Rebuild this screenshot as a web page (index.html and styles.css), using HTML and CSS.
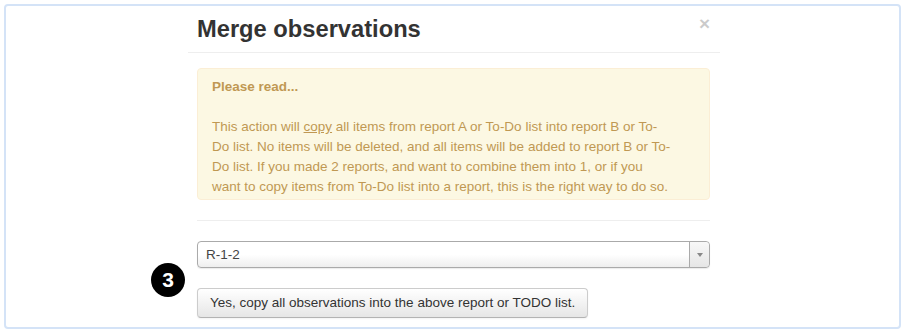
FILE: index.html
```html
<!DOCTYPE html>
<html lang="en">
<head>
  <meta charset="UTF-8" />
  <title>Merge observations</title>
  <link rel="stylesheet" href="styles.css">
</head>
<body>
  <div class="frame">
    <!-- step marker -->
    <div class="step">3</div>

    <div class="modal">
      <div class="modal-header">
        <span class="close">&times;</span>
        <h3>Merge observations</h3>
      </div>

      <div class="modal-body">
        <div class="alert">
          <strong>Please read...</strong><br><br>
          This action will <u>copy</u> all items from report A or To-Do list into report B or To-Do list. No items will be deleted, and all items will be added to report B or To-Do list. If you made 2 reports, and want to combine them into 1, or if you want to copy items from To-Do list into a report, this is the right way to do so.
        </div>

        <hr>

        <div class="select">
          <span class="select-text">R-1-2</span>
          <span class="select-arrow"><b></b></span>
        </div>

        <button class="btn">Yes, copy all observations into the above report or TODO list.</button>
      </div>
    </div>
  </div>
</body>
</html>
```

FILE: styles.css
```css
* {
  box-sizing: border-box;
}

body {
  margin: 0;
  font-family: "Liberation Sans", Arial, sans-serif;
  font-size: 13.5px;
  line-height: 20px;
  color: #333;
  background: #fff;
}

.frame {
  position: relative;
  margin: 4px;
  height: 325px;
  border: 2px solid #d4e3f7;
  border-radius: 4px;
  overflow: hidden;
}

.step {
  position: absolute;
  left: 145px;
  top: 257px;
  width: 34px;
  height: 34px;
  border-radius: 50%;
  background: #000;
  color: #fff;
  font-weight: bold;
  font-size: 21px;
  line-height: 34px;
  text-align: center;
}

.modal {
  width: 532px;
  margin-left: 182px;
}

.modal-header {
  padding: 3px 9px;
  border-bottom: 1px solid #eee;
}

.modal-header h3 {
  margin: 0;
  font-size: 23.7px;
  line-height: 40px;
  font-weight: bold;
  color: #333;
}

.close {
  float: right;
  margin-top: 5px;
  margin-right: 1px;
  font-size: 19px;
  font-weight: bold;
  line-height: 20px;
  color: #000;
  opacity: 0.2;
}

.modal-body {
  padding: 15px 10px 0 9px;
}

.alert {
  padding: 8px 35px 2px 14px;
  background: #fcf8e3;
  border: 1px solid #fbeed5;
  border-radius: 4px;
  color: #c09853;
}

hr {
  margin: 20px 0 19px;
  border: 0;
  border-top: 1px solid #eee;
  border-bottom: 1px solid #fff;
}

.select {
  display: flex;
  align-items: center;
  height: 27px;
  border: 1px solid #aaa;
  border-radius: 4px;
  background: linear-gradient(to bottom, #fff 0%, #fff 50%, #eee 100%);
  box-shadow: 0 1px 1px rgba(0, 0, 0, 0.08);
  color: #444;
  font-size: 13.5px;
}

.select-text {
  flex: 1;
  padding-left: 8px;
}

.select-arrow {
  display: flex;
  align-items: center;
  justify-content: center;
  width: 20px;
  height: 100%;
  border-left: 1px solid #aaa;
  border-radius: 0 4px 4px 0;
  background: linear-gradient(to bottom, #f8f8f8 0%, #e6e6e6 100%);
}

.select-arrow b {
  width: 0;
  height: 0;
  border-left: 3px solid transparent;
  border-right: 3px solid transparent;
  border-top: 4px solid #888;
}

.btn {
  margin-top: 20px;
  padding: 4px 12px;
  font-family: inherit;
  font-size: 13.5px;
  line-height: 20px;
  color: #333;
  background: linear-gradient(to bottom, #fff 0%, #e6e6e6 100%);
  border: 1px solid #ccc;
  border-bottom-color: #b3b3b3;
  border-radius: 4px;
  box-shadow: inset 0 1px 0 rgba(255, 255, 255, 0.2), 0 1px 2px rgba(0, 0, 0, 0.05);
}
```
